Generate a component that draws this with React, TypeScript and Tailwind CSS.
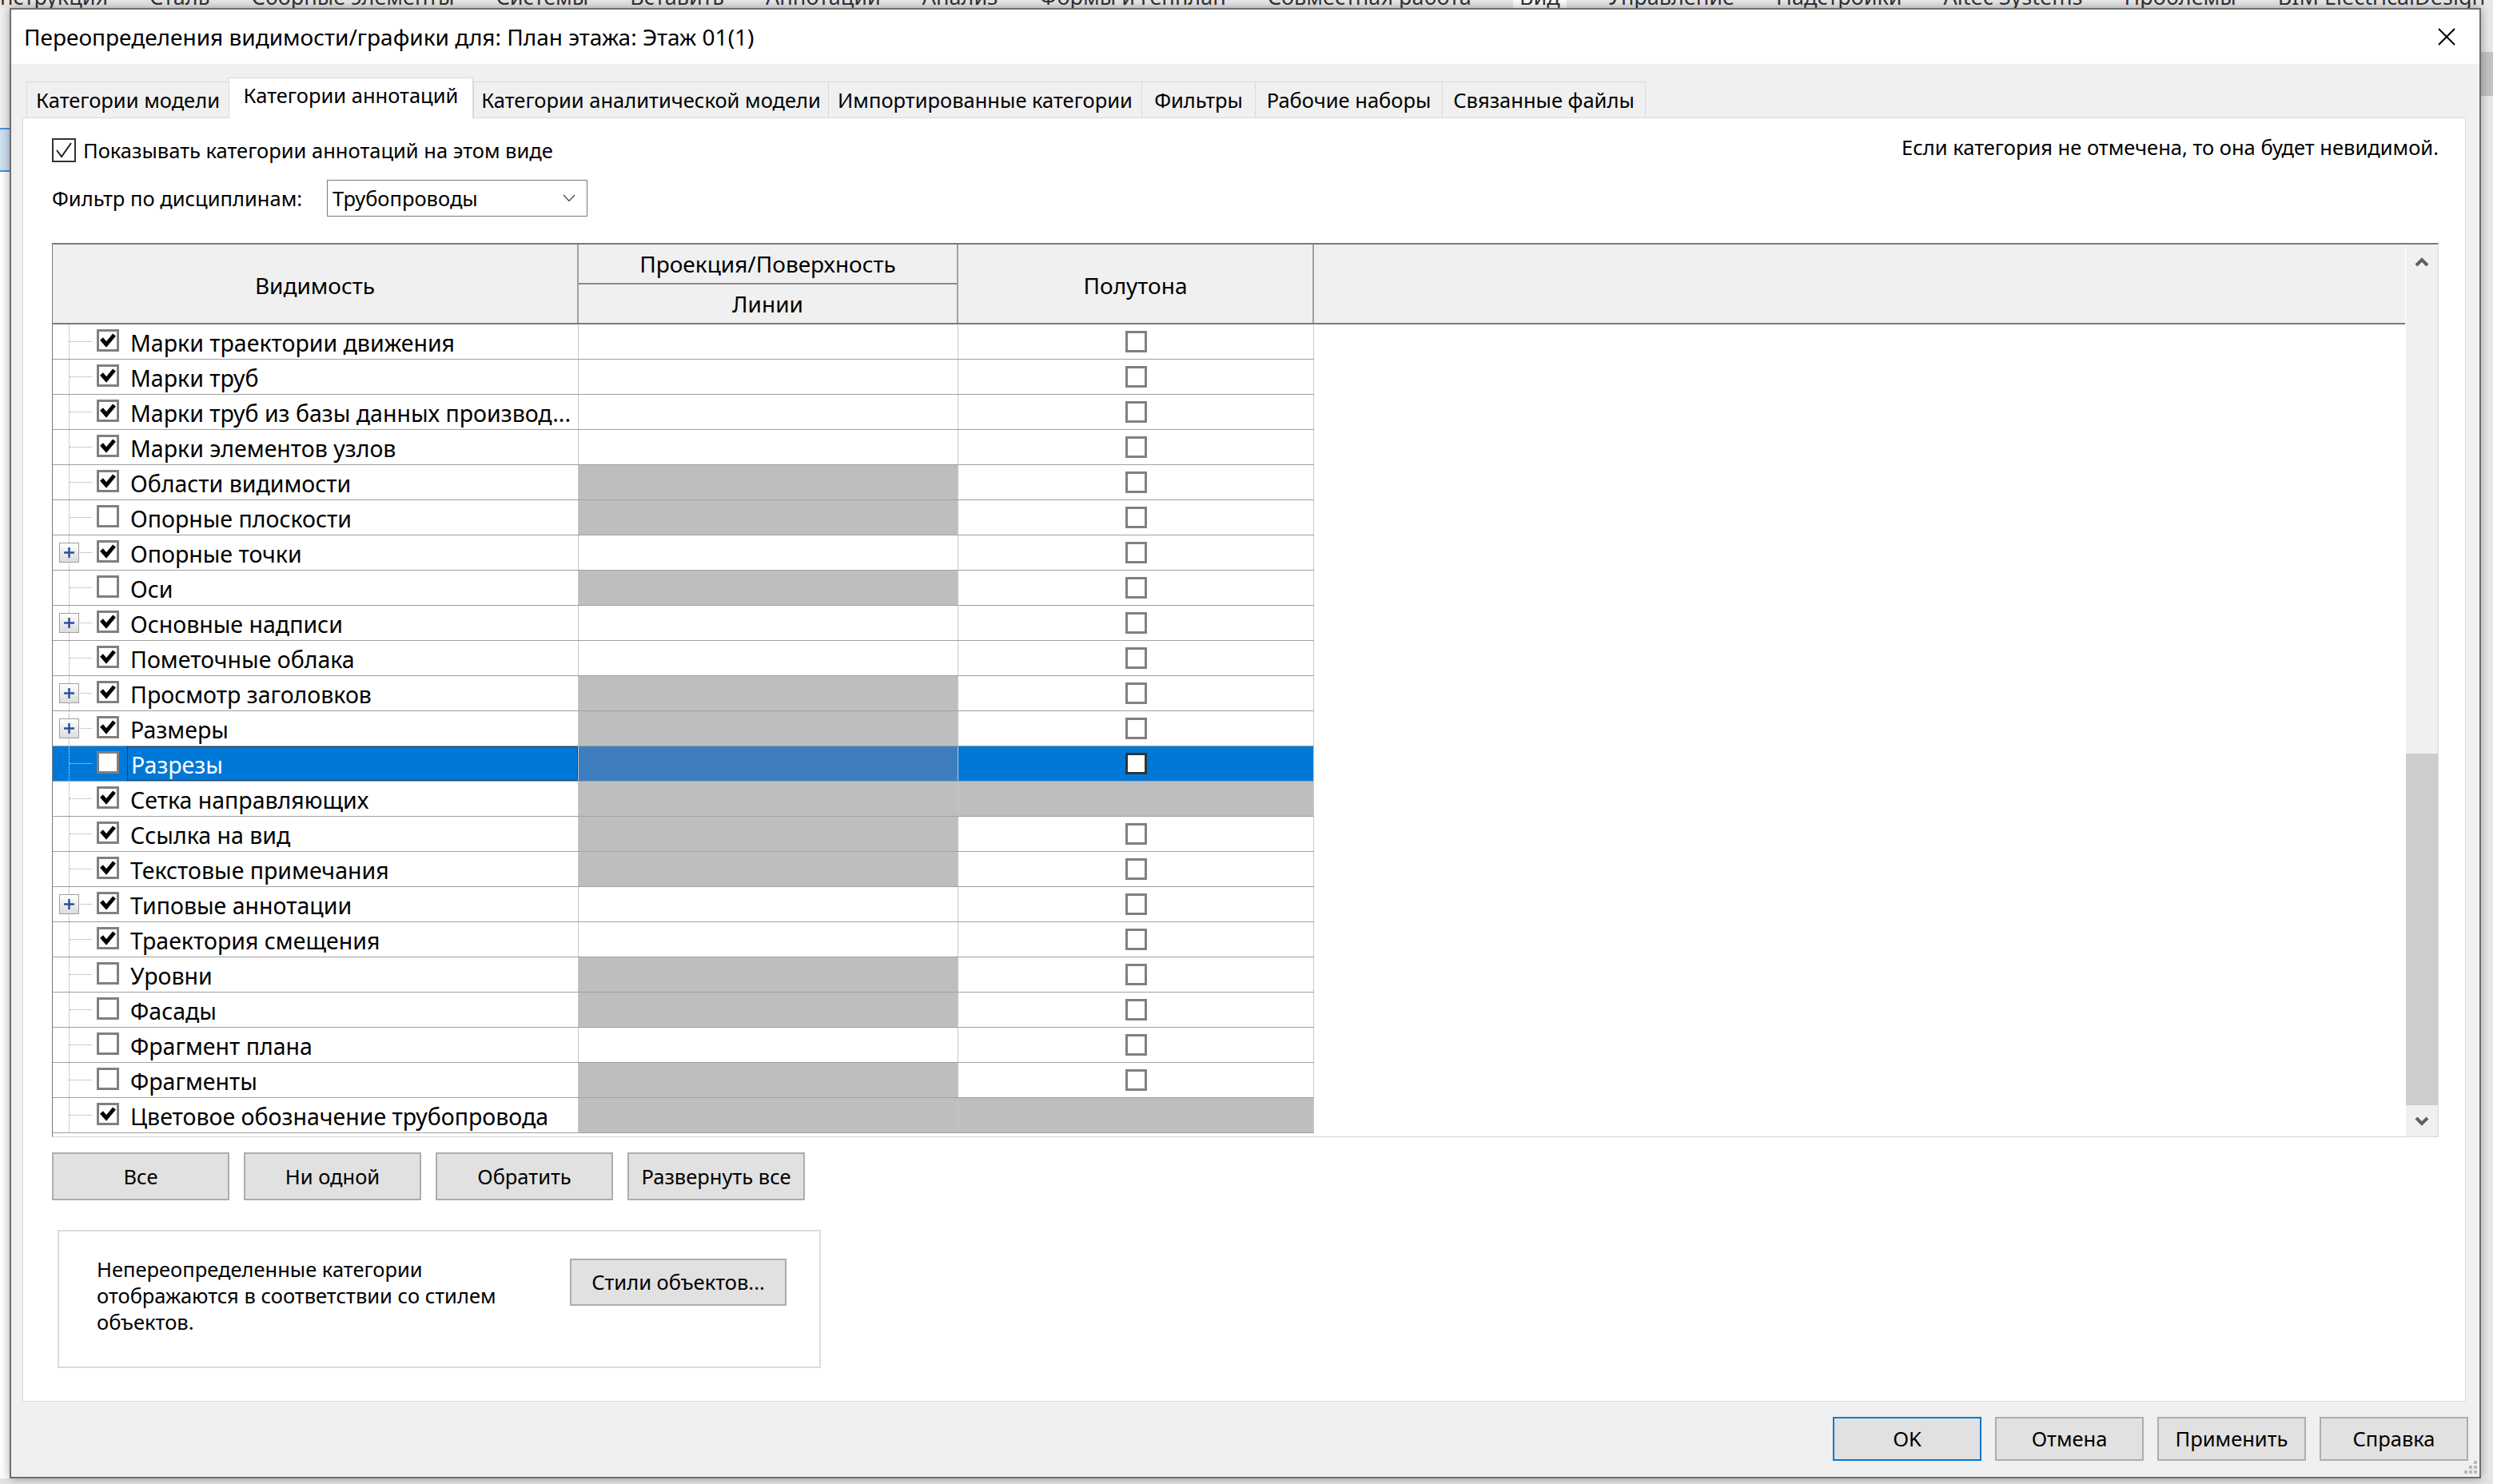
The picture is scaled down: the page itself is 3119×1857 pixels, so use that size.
import React from 'react';

type Item = {
  name: string;
  checked: boolean;
  plus?: boolean;
  grayProj?: boolean;
  grayHalf?: boolean;
  selected?: boolean;
};

const items: Item[] = [
  { name: 'Марки траектории движения', checked: true },
  { name: 'Марки труб', checked: true },
  { name: 'Марки труб из базы данных производ...', checked: true },
  { name: 'Марки элементов узлов', checked: true },
  { name: 'Области видимости', checked: true, grayProj: true },
  { name: 'Опорные плоскости', checked: false, grayProj: true },
  { name: 'Опорные точки', checked: true, plus: true },
  { name: 'Оси', checked: false, grayProj: true },
  { name: 'Основные надписи', checked: true, plus: true },
  { name: 'Пометочные облака', checked: true },
  { name: 'Просмотр заголовков', checked: true, plus: true, grayProj: true },
  { name: 'Размеры', checked: true, plus: true, grayProj: true },
  { name: 'Разрезы', checked: false, grayProj: true, selected: true },
  { name: 'Сетка направляющих', checked: true, grayProj: true, grayHalf: true },
  { name: 'Ссылка на вид', checked: true, grayProj: true },
  { name: 'Текстовые примечания', checked: true, grayProj: true },
  { name: 'Типовые аннотации', checked: true, plus: true },
  { name: 'Траектория смещения', checked: true },
  { name: 'Уровни', checked: false, grayProj: true },
  { name: 'Фасады', checked: false, grayProj: true },
  { name: 'Фрагмент плана', checked: false },
  { name: 'Фрагменты', checked: false, grayProj: true },
  { name: 'Цветовое обозначение трубопровода', checked: true, grayProj: true, grayHalf: true },
];

const tabs = [
  { label: 'Категории модели', w: 'w-[253px]' },
  { label: 'Категории аннотаций', w: 'w-[306px]', active: true },
  { label: 'Категории аналитической модели', w: 'w-[444px]' },
  { label: 'Импортированные категории', w: 'w-[392px]' },
  { label: 'Фильтры', w: 'w-[142px]' },
  { label: 'Рабочие наборы', w: 'w-[234px]' },
  { label: 'Связанные файлы', w: 'w-[255px]' },
];

const ribbon = [
  'нструкция', 'Сталь', 'Сборные элементы', 'Системы', 'Вставить', 'Аннотации', 'Анализ',
  'Формы и генплан', 'Совместная работа', 'Вид', 'Управление', 'Надстройки', 'Altec Systems',
  'Проблемы', 'BIM ElectricalDesign',
];

function TreeCheck({ checked }: { checked: boolean }) {
  return (
    <div className="w-[28px] h-[28px] shrink-0 border-[3px] border-[#808080] bg-white flex items-center justify-center">
      {checked && (
        <svg viewBox="0 0 22 22" className="w-[22px] h-[22px]">
          <path d="M3 9 L9 16 L19 4" fill="none" stroke="#000" strokeWidth="5" />
        </svg>
      )}
    </div>
  );
}

function PlusBox() {
  return (
    <div className="absolute left-[-13px] top-[9px] w-[25px] h-[25px] border border-[#a0a0a0] bg-gradient-to-b from-[#ffffff] to-[#dcdcdc] flex items-center justify-center">
      <svg viewBox="0 0 15 15" className="w-[15px] h-[15px]">
        <path d="M7.5 1 V14 M1 7.5 H14" stroke="#2d4f9e" strokeWidth="2.5" />
      </svg>
    </div>
  );
}

function WinButton({ label, w, primary }: { label: string; w: string; primary?: boolean }) {
  return (
    <div
      className={`${w} h-full flex items-center justify-center bg-[#e1e1e1] border-2 text-[25.5px] text-black ${
        primary ? 'border-[#0078d7]' : 'border-[#adadad]'
      }`}
    >
      {label}
    </div>
  );
}

function TableRow({ it }: { it: Item }) {
  const sel = it.selected;
  const gray = sel ? 'bg-[#3e7ebe]' : 'bg-[#bebebe]';
  const dots = sel ? 'border-[#cfe3f6]' : 'border-[#a0a0a0]';
  return (
    <div className={`w-[1578px] h-[44px] shrink-0 flex border-b border-[#a0a0a0] ${sel ? 'bg-[#0078d7]' : ''}`}>
      {/* Видимость */}
      <div className="w-[658px] shrink-0 h-full flex border-r border-[#c8c8c8]">
        <div className="w-[20px] shrink-0" />
        <div className={`relative w-[29px] shrink-0 h-full border-l border-dotted ${dots} flex items-center`}>
          <div className={`w-full border-t border-dotted ${dots}`} />
          {it.plus && <PlusBox />}
        </div>
        <div className="w-[6px] shrink-0" />
        <div className="pt-[6px]">
          <TreeCheck checked={it.checked} />
        </div>
        <div
          className={`ml-[10px] flex-1 min-w-0 h-full flex items-center pl-[4px] pt-[3px] whitespace-nowrap overflow-hidden text-[28.5px] ${
            sel ? 'text-white border border-dotted border-[#1a1a1a]' : 'text-black'
          }`}
        >
          {it.name}
        </div>
      </div>
      {/* Проекция/Поверхность */}
      <div className={`w-[475px] shrink-0 h-full border-r border-[#c8c8c8] ${it.grayProj ? gray : ''}`} />
      {/* Полутона */}
      <div
        className={`w-[445px] shrink-0 h-full border-r border-[#c8c8c8] flex items-center justify-center ${
          it.grayHalf ? 'bg-[#bebebe]' : ''
        }`}
      >
        {!it.grayHalf && (
          <div
            className={`w-[27px] h-[27px] bg-white ${sel ? 'border-[3px] border-[#333333]' : 'border-[3px] border-[#808080]'}`}
          />
        )}
      </div>
    </div>
  );
}

export default function App() {
  return (
    <div className="w-[3119px] h-[1857px] overflow-hidden flex flex-col bg-[#ececec] font-['Noto_Sans',sans-serif]">
      {/* Ribbon behind the dialog */}
      <div className="h-[10px] shrink-0 overflow-hidden bg-[#e9e9e9]">
        <div className="flex gap-[52px] mt-[-24px] text-[27px] text-[#333] whitespace-nowrap">
          {ribbon.map((r) => (
            <span key={r} className={r === 'Вид' ? 'bg-white px-[8px]' : ''}>
              {r}
            </span>
          ))}
        </div>
      </div>

      <div className="h-[1840px] shrink-0 flex">
        {/* App content left of dialog */}
        <div className="w-[12px] shrink-0 flex flex-col">
          <div className="h-[150px] bg-[#f0f0f0]" />
          <div className="h-[55px] bg-[#cfe1f3] border-y-2 border-[#4a90d9]" />
          <div className="flex-1 bg-white" />
        </div>

        {/* Dialog */}
        <div className="relative w-[3092px] shrink-0 flex flex-col border-2 border-[#6e6e6e] bg-[#f0f0f0] shadow-[0_0_12px_rgba(0,0,0,0.35)]">
          {/* Title bar */}
          <div className="h-[68px] shrink-0 bg-white flex items-center pl-[16px] pr-[30px]">
            <div className="flex-1 text-[28px] text-black">
              Переопределения видимости/графики для: План этажа: Этаж 01(1)
            </div>
            <svg viewBox="0 0 22 22" className="w-[22px] h-[22px]">
              <path d="M1 1 L21 21 M21 1 L1 21" stroke="#000" strokeWidth="2" />
            </svg>
          </div>

          {/* Body */}
          <div className="flex-1 flex flex-col pl-[14px] pr-[14px] pt-[17px] pb-[20px]">
            {/* Tabs */}
            <div className="h-[50px] shrink-0 flex items-end pl-[5px] mr-[3px]">
              {tabs.map((t) =>
                t.active ? (
                  <div
                    key={t.label}
                    className={`${t.w} h-[51px] mb-[-1px] shrink-0 bg-white border border-b-0 border-[#d9d9d9] flex items-center justify-center pb-[8px] text-[25.5px] text-black relative`}
                  >
                    {t.label}
                  </div>
                ) : (
                  <div
                    key={t.label}
                    className={`${t.w} h-[45px] shrink-0 bg-[#f0f0f0] border-t border-l last:border-r border-[#d9d9d9] flex items-center justify-center text-[25.5px] text-black`}
                  >
                    {t.label}
                  </div>
                )
              )}
            </div>

            {/* Tab page */}
            <div className="h-[1607px] shrink-0 mr-[3px] bg-white border border-[#d9d9d9] flex flex-col pl-[36px] pr-[33px]">
              <div className="mt-[25px] h-[30px] flex items-center justify-between">
                <div className="flex items-center">
                  <div className="w-[30px] h-[30px] border-2 border-[#333] bg-white flex items-center justify-center">
                    <svg viewBox="0 0 26 26" className="w-[26px] h-[26px]">
                      <path d="M4 13 L10 21 L22 4" fill="none" stroke="#222" strokeWidth="2" />
                    </svg>
                  </div>
                  <span className="ml-[9px] text-[25.5px] text-black">Показывать категории аннотаций на этом виде</span>
                </div>
                <span className="text-[25.5px] text-black mt-[-8px]">
                  Если категория не отмечена, то она будет невидимой.
                </span>
              </div>

              <div className="mt-[22px] h-[46px] flex items-center">
                <span className="w-[344px] text-[25.5px] text-black">Фильтр по дисциплинам:</span>
                <div className="w-[326px] h-full border border-[#7a7a7a] bg-white flex items-center pl-[6px] pr-[14px]">
                  <span className="flex-1 text-[25.5px] text-black">Трубопроводы</span>
                  <svg viewBox="0 0 16 10" className="w-[16px] h-[10px]">
                    <path d="M1 1 L8 8.5 L15 1" fill="none" stroke="#555" strokeWidth="1.5" />
                  </svg>
                </div>
              </div>

              {/* Grid */}
              <div className="mt-[33px] h-[1119px] shrink-0 flex border-t-2 border-l border-[#7a7a7a] border-r border-r-[#d9d9d9] border-b border-b-[#d9d9d9]">
                <div className="flex-1 min-w-0 flex flex-col bg-white">
                  <div className="h-[100px] shrink-0 flex bg-[#f0f0f0] border-b-2 border-[#7a7a7a] text-[28px] text-black">
                    <div className="w-[658px] shrink-0 border-r-2 border-[#a0a0a0] flex items-center justify-center pt-[4px]">
                      Видимость
                    </div>
                    <div className="w-[475px] shrink-0 border-r-2 border-[#a0a0a0] flex flex-col">
                      <div className="h-[50px] border-b-2 border-[#8a8a8a] flex items-center justify-center">
                        Проекция/Поверхность
                      </div>
                      <div className="flex-1 flex items-center justify-center">Линии</div>
                    </div>
                    <div className="w-[445px] shrink-0 border-r-2 border-[#a0a0a0] flex items-center justify-center pt-[4px]">
                      Полутона
                    </div>
                    <div className="flex-1" />
                  </div>
                  <div className="flex-1 flex flex-col overflow-hidden">
                    {items.map((it) => (
                      <TableRow key={it.name} it={it} />
                    ))}
                  </div>
                </div>
                {/* Scrollbar */}
                <div className="w-[41px] shrink-0 bg-[#f0f0f0] flex flex-col border-l border-white">
                  <div className="h-[41px] shrink-0 flex items-center justify-center pt-[2px]">
                    <svg viewBox="0 0 18 12" className="w-[18px] h-[12px]">
                      <path d="M2 10 L9 3 L16 10" fill="none" stroke="#606060" strokeWidth="4" />
                    </svg>
                  </div>
                  <div className="h-[596px] shrink-0" />
                  <div className="h-[440px] shrink-0 bg-[#cdcdcd]" />
                  <div className="flex-1 flex items-center justify-center">
                    <svg viewBox="0 0 18 12" className="w-[18px] h-[12px]">
                      <path d="M2 2 L9 9 L16 2" fill="none" stroke="#606060" strokeWidth="4" />
                    </svg>
                  </div>
                </div>
              </div>

              {/* Selection buttons */}
              <div className="mt-[19px] h-[60px] flex gap-[18px]">
                <WinButton label="Все" w="w-[222px]" />
                <WinButton label="Ни одной" w="w-[222px]" />
                <WinButton label="Обратить" w="w-[222px]" />
                <WinButton label="Развернуть все" w="w-[222px]" />
              </div>

              {/* Object styles group */}
              <div className="mt-[37px] ml-[7px] w-[955px] h-[173px] border-2 border-[#dcdcdc] flex pl-[47px] pt-[31px]">
                <div className="w-[592px] text-[25.5px] leading-[33px] text-black">
                  Непереопределенные категории
                  <br />
                  отображаются в соответствии со стилем
                  <br />
                  объектов.
                </div>
                <div className="h-[59px] mt-[3px]">
                  <WinButton label="Стили объектов..." w="w-[271px]" />
                </div>
              </div>
            </div>

            {/* Dialog buttons */}
            <div className="mt-[19px] h-[55px] flex justify-end gap-[17px]">
              <WinButton label="OK" w="w-[186px]" primary />
              <WinButton label="Отмена" w="w-[186px]" />
              <WinButton label="Применить" w="w-[186px]" />
              <WinButton label="Справка" w="w-[186px]" />
            </div>
          </div>

          {/* Size grip */}
          <div className="absolute right-[3px] bottom-[4px] grid grid-cols-3 gap-[2px]">
            <span className="w-[4px] h-[4px]" />
            <span className="w-[4px] h-[4px]" />
            <span className="w-[4px] h-[4px] bg-[#b8b8b8]" />
            <span className="w-[4px] h-[4px]" />
            <span className="w-[4px] h-[4px] bg-[#b8b8b8]" />
            <span className="w-[4px] h-[4px] bg-[#b8b8b8]" />
            <span className="w-[4px] h-[4px] bg-[#b8b8b8]" />
            <span className="w-[4px] h-[4px] bg-[#b8b8b8]" />
            <span className="w-[4px] h-[4px] bg-[#b8b8b8]" />
          </div>
        </div>

        {/* App content right of dialog */}
        <div className="flex-1 flex flex-col bg-[#e8e8e8]">
          <div className="h-[55px]" />
          <div className="h-[55px] bg-[#c4c4c4]" />
          <div className="flex-1" />
        </div>
      </div>

      <div className="flex-1 bg-[#e4e4e4]" />
    </div>
  );
}
